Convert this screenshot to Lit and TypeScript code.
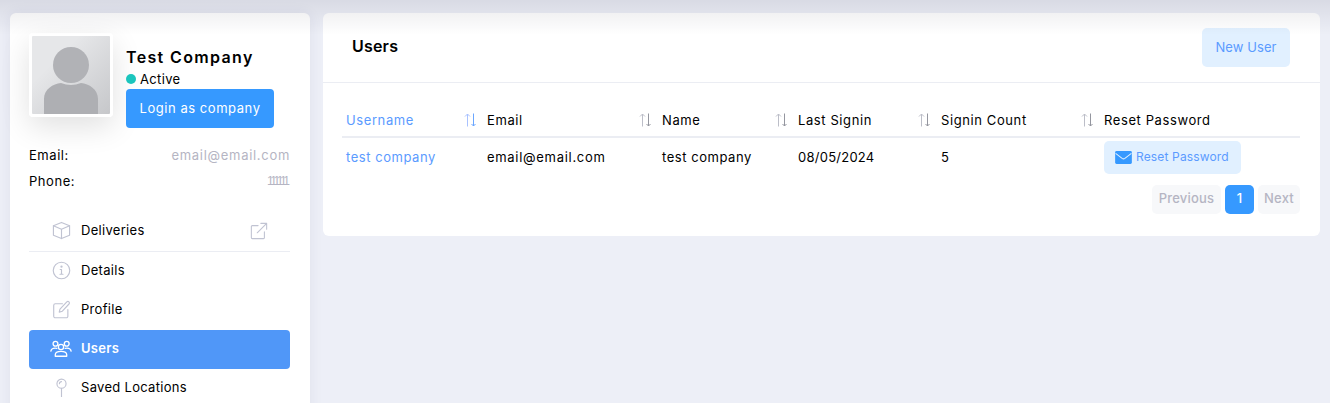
import { LitElement, html, css, svg } from "lit";
import { customElement } from "lit/decorators.js";

const icon = (body: unknown, size = 20, cls = "ic") =>
  html`<svg class=${cls} width=${size} height=${size} viewBox="0 0 20 20" fill="none" stroke="currentColor" stroke-width="1.2" stroke-linecap="round" stroke-linejoin="round">${body}</svg>`;

const box = svg`<path d="M10 1.5 L18.5 5 V15 L10 18.5 L1.5 15 V5 Z"/><path d="M1.5 5 L10 8.7 L18.5 5 M10 8.7 V18.5"/>`;
const info = svg`<circle cx="10" cy="10" r="8.7"/><path d="M10 9 V14 M8.4 14 H11.6 M8.6 9 H10"/><circle cx="10" cy="6" r=".6"/>`;
const edit = svg`<path d="M11 4 H3.5 a1.7 1.7 0 0 0 -1.7 1.7 V17 A1.7 1.7 0 0 0 3.5 18.7 H15 A1.7 1.7 0 0 0 16.7 17 V10"/><path d="M7.6 12.8 L8.4 9.5 L15.6 2 a1.5 1.5 0 0 1 2.3 2.2 L10.9 11.8 Z"/>`;
const users = svg`<circle cx="5" cy="5.2" r="2.2"/><circle cx="15.2" cy="5.2" r="2.2"/><circle cx="10" cy="8.2" r="2.4"/><path d="M.8 12 C1.2 9.8 3.5 9 6.2 9.4 M19.2 12 C18.8 9.8 16.5 9 13.8 9.4"/><path d="M4.8 16.6 V15.2 C4.8 13 7 12.2 10 12.2 S15.2 13 15.2 15.2 V16.6 Z"/>`;
const pin = svg`<circle cx="10" cy="6" r="4.8"/><path d="M10 10.8 V20 M7.8 6 a2.2 2.2 0 0 1 2.2 -2.2"/>`;
const ext = svg`<path d="M9 4 H2.5 a1 1 0 0 0 -1 1 V17.5 a1 1 0 0 0 1 1 H15 a1 1 0 0 0 1 -1 V11"/><path d="M8 12 L18.5 1.5 M12 1.5 H18.5 V8"/>`;

const nav = [
  { label: "Details", icon: info },
  { label: "Profile", icon: edit },
  { label: "Users", icon: users, active: true },
  { label: "Saved Locations", icon: pin },
];

const cols = [
  { label: "Username", sort: true, active: true },
  { label: "Email", sort: true },
  { label: "Name", sort: true },
  { label: "Last Signin", sort: true },
  { label: "Signin Count", sort: true },
  { label: "Reset Password" },
];

const sortIcon = (active?: boolean) => html`<svg class="sort ${active ? "on" : ""}" width="13" height="14" viewBox="0 0 13 14" fill="none" stroke-width="1">
  <path class="up" d="M3.5 13.5 V1 M1 3.5 L3.5 1 L6 3.5"/>
  <path class="down" d="M9.5 .5 V13 M7.5 11 L9.5 13 L11.5 11"/>
</svg>`;

@customElement("app-root")
export class AppRoot extends LitElement {
  static styles = css`
    :host {
      display: block;
      position: relative;
      height: 100vh;
      overflow: hidden;
      background: #edeff7;
      color: #000;
      font: 13px/1.4 Inter, "Liberation Sans", sans-serif;
      letter-spacing: .55px;
    }
    .shade {
      position: absolute;
      inset: 0 0 auto 0;
      height: 35px;
      background: linear-gradient(rgba(0, 0, 30, .085), rgba(0, 0, 30, 0));
      pointer-events: none;
    }
    .page {
      display: grid;
      grid-template-columns: 300px 997px;
      gap: 13px;
      padding: 13px 10px 0;
      align-items: start;
    }
    .card { background: #fff; border-radius: 6px; }
    .side {
      padding: 20px 20px 0 19px;
      box-shadow: 0 0 14px rgba(40, 40, 90, .07);
      height: 420px;
    }
    .head { display: flex; gap: 13px; }
    .avatar {
      width: 84px; height: 84px; box-sizing: border-box;
      border: 3px solid #fff; border-radius: 4px; flex: none;
      box-shadow: 0 10px 30px rgba(0, 0, 0, .12);
      background: linear-gradient(135deg, #e6e7e9 30%, #c6c7ca);
      display: flex;
    }
    .who { margin-top: 12px; display: flex; flex-direction: column; align-items: flex-start; }
    .who h2 { margin: 0; font-size: 16px; line-height: 24px; font-weight: 600; letter-spacing: 1.35px; }
    .status { display: flex; align-items: center; gap: 4px; height: 20px; letter-spacing: .35px; }
    .dot { width: 10px; height: 10px; border-radius: 50%; background: #1bc5bd; }
    .login {
      width: 148px; height: 39px; display: flex; align-items: center; justify-content: center;
      background: #3699ff; color: #fff; border-radius: 4px; font-weight: 400;
    }
    .info { margin-top: 14px; }
    .info div { display: flex; justify-content: space-between; height: 26px; align-items: center; }
    .info span { color: #b5b5c3; letter-spacing: .7px; }
    .info .num { font-family: "Liberation Sans", sans-serif; letter-spacing: -2.5px; font-size: 12px; padding-right: 2.5px; }
    nav { margin-top: 18px; display: flex; flex-direction: column; letter-spacing: .3px; }
    .item {
      display: flex; align-items: center; height: 39px; padding: 0 22px 2px 23px; gap: 10px;
      color: #000; border-radius: 4px; box-sizing: border-box;
    }
    .item .ic { color: #c0c3d2; flex: none; width: 19px; height: 19px; }
    .item.first { border-bottom: 1px solid #ebedf3; border-radius: 0; height: 40px; }
    .item.first .ext { margin-left: auto; width: 18px; height: 18px; }
    .item.active { background: #5097f8; color: #fff; font-weight: 600; }
    .item.active .ic { color: #fff; width: 22px; height: 22px; margin: 0 -1px 0 -2px; }
    .main { height: 223px; }
    .top {
      height: 69px; display: flex; justify-content: space-between; align-items: center;
      padding: 0 30px 0 29px; border-bottom: 1px solid #ebedf3;
    }
    .top h3 { margin: 0 0 2px; font-size: 16px; font-weight: 600; letter-spacing: .2px; }
    .soft {
      display: flex; align-items: center; justify-content: center;
      background: #e1f0ff; color: #3699ff; border-radius: 5px;
    }
    .new { width: 88px; height: 39px; letter-spacing: .1px; color: #5b9bff; }
    .body { padding: 21px 20px 0 19px; }
    table { border-collapse: collapse; table-layout: fixed; width: 958px; }
    th {
      height: 33px; padding: 0 4px; text-align: left; font-weight: 400; letter-spacing: .6px;
      border-bottom: 2px solid #ebedf3; box-sizing: border-box;
    }
    th .cell { display: flex; justify-content: space-between; align-items: center; padding-right: 2px; }
    th.on { color: #5b9bff; }
    td { height: 39px; padding: 0 4px; }
    td a { color: #5b9bff; }
    .date { letter-spacing: .25px; }
    .mail { letter-spacing: .7px; }
    .sort { flex: none; }
    .sort .up { stroke: #bcbec8; }
    .sort .down { stroke: #94969f; }
    .sort.on .up { stroke: #a9c2ff; }
    .sort.on .down { stroke: #6aa6ff; }
    .c1 { width: 141px; } .c2 { width: 175px; } .c3 { width: 136px; }
    .c4 { width: 143px; } .c5 { width: 163px; } .c6 { width: 200px; }
    .reset {
      width: 137px; height: 33px; gap: 4px; color: #5b9bff; box-sizing: border-box;
      justify-content: flex-start; padding-left: 11px; font-size: 12px; letter-spacing: .15px;
    }
    .reset svg { flex: none; }
    .pager { display: flex; justify-content: flex-end; gap: 4px; margin-top: 8px; letter-spacing: .2px; }
    .pager span {
      height: 29px; display: flex; align-items: center; justify-content: center; box-sizing: border-box;
      padding-bottom: 2px; border-radius: 5px; background: #f7f8fa; color: #b5b5c3; font-weight: 500;
    }
    .pager .p { width: 69px; } .pager .n { width: 42px; }
    .pager .cur { width: 29px; background: #3699ff; color: #fff; }
  `;

  render() {
    return html`
      <div class="page">
        <aside class="card side">
          <div class="head">
            <div class="avatar">
              <svg width="78" height="78" viewBox="0 0 78 78">
                <circle cx="39" cy="29" r="18" fill="#b1b2b6"/>
                <path d="M12 78 V63 C12 53 21 48 29 47 Q39 51 49 47 C57 48 66 53 66 63 V78 Z" fill="#aeafb3"/>
              </svg>
            </div>
            <div class="who">
              <h2>Test Company</h2>
              <div class="status"><i class="dot"></i>Active</div>
              <div class="login">Login as company</div>
            </div>
          </div>
          <div class="info">
            <div>Email:<span>email@email.com</span></div>
            <div>Phone:<span class="num">111111</span></div>
          </div>
          <nav>
            <div class="item first">${icon(box)}Deliveries${icon(ext, 18, "ic ext")}</div>
            ${nav.map(
              (n) => html`<div class="item ${n.active ? "active" : ""}">${icon(n.icon)}${n.label}</div>`
            )}
          </nav>
        </aside>
        <section class="card main">
          <div class="top">
            <h3>Users</h3>
            <div class="soft new">New User</div>
          </div>
          <div class="body">
            <table>
              <thead>
                <tr>
                  ${cols.map(
                    (c, i) => html`<th class="c${i + 1} ${c.active ? "on" : ""}">
                      <div class="cell">${c.label}${c.sort ? sortIcon(c.active) : ""}</div>
                    </th>`
                  )}
                </tr>
              </thead>
              <tbody>
                <tr>
                  <td><a>test company</a></td>
                  <td class="mail">email@email.com</td>
                  <td>test company</td>
                  <td class="date">08/05/2024</td>
                  <td>5</td>
                  <td>
                    <div class="soft reset">
                      <svg width="17" height="13" viewBox="0 0 18 14">
                        <rect width="18" height="14" rx="1.5" fill="#3699ff"/>
                        <path d="M.5 2.5 L7.5 8 Q9 9 10.5 8 L17.5 2.5" fill="none" stroke="#e1f0ff" stroke-width="1.1"/>
                      </svg>
                      Reset Password
                    </div>
                  </td>
                </tr>
              </tbody>
            </table>
            <div class="pager">
              <span class="p">Previous</span><span class="cur">1</span><span class="n">Next</span>
            </div>
          </div>
        </section>
      </div>
      <div class="shade"></div>
    `;
  }
}
